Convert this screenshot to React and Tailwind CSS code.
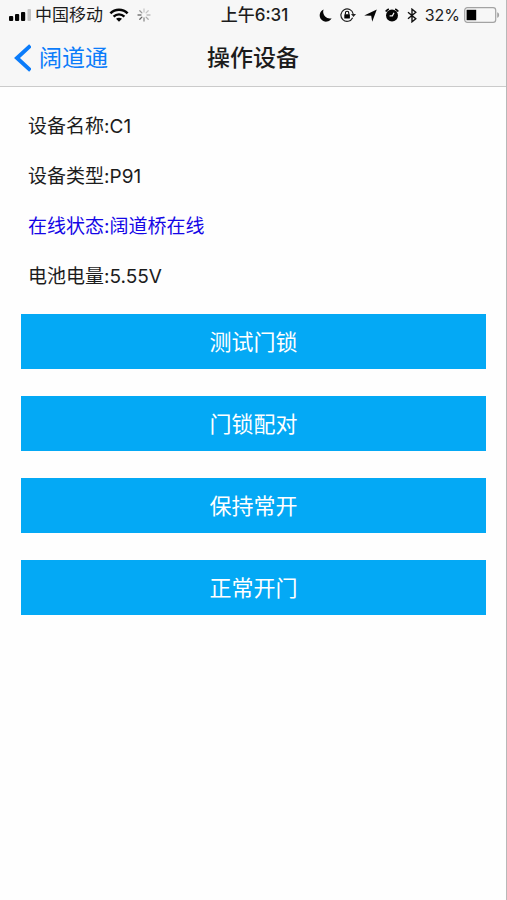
import React from "react";

function SignalIcon() {
  return (
    <svg width="22" height="12" viewBox="0 0 22 12" aria-hidden="true">
      <rect x="0" y="7" width="4.2" height="5" rx="1" fill="#050505" />
      <rect x="6" y="5" width="4.2" height="7" rx="1" fill="#050505" />
      <rect x="12" y="3" width="4.2" height="9" rx="1" fill="#050505" />
      <rect x="18.5" y="0" width="3.5" height="12" rx="1" fill="#c4c4c4" />
    </svg>
  );
}

function WifiIcon() {
  return (
    <svg width="20" height="14" viewBox="0 0 20 14" aria-hidden="true">
      <path d="M1.4 5.4C6.2 0.6 13.8 0.6 18.6 5.4" fill="none" stroke="#050505" strokeWidth="2.6" />
      <path d="M4.6 8.6C7.6 5.6 12.4 5.6 15.4 8.6" fill="none" stroke="#050505" strokeWidth="2.4" />
      <path d="M7 10.8C8.7 9.3 11.3 9.3 13 10.8L10 13.8Z" fill="#050505" />
    </svg>
  );
}

function SpinnerIcon() {
  return (
    <svg width="14" height="14" viewBox="0 0 14 14" fill="none" strokeWidth="1.3" strokeLinecap="round" aria-hidden="true">
      <path d="M7 4V1" stroke="#c9c9c9" />
      <path d="M9.1 4.9L11.2 2.8" stroke="#c4c4c4" />
      <path d="M10 7H13" stroke="#bdbdbd" />
      <path d="M9.1 9.1L11.2 11.2" stroke="#aaa" />
      <path d="M7 10V13" stroke="#8c8c8c" />
      <path d="M4.9 9.1L2.8 11.2" stroke="#666" />
      <path d="M4 7H1" stroke="#777" />
      <path d="M4.9 4.9L2.8 2.8" stroke="#999" />
    </svg>
  );
}

function MoonIcon() {
  return (
    <svg width="13" height="13" viewBox="0 0 13 13" aria-hidden="true">
      <path d="M4.6 0.5A6.3 6.3 0 1 0 12.6 9.2C8 10.8 2.6 6 4.6 0.5Z" fill="#050505" />
    </svg>
  );
}

function RotationLockIcon() {
  return (
    <svg width="16" height="14" viewBox="0 0 16 14" aria-hidden="true">
      <path d="M12.7 9.8A6.2 6.2 0 1 1 13.2 6" fill="none" stroke="#222" strokeWidth="1.2" />
      <path d="M11 6H16L13.5 9Z" fill="#222" />
      <rect x="4.3" y="6.2" width="5.6" height="4.2" rx="0.5" fill="#050505" />
      <path d="M5.4 6.5V5A1.7 1.7 0 0 1 8.8 5V6.5" fill="none" stroke="#050505" strokeWidth="1.1" />
    </svg>
  );
}

function LocationIcon() {
  return (
    <svg width="13" height="13" viewBox="0 0 13 13" aria-hidden="true">
      <path d="M12.8 0.4L8.2 12.8L7.2 6.8L0.2 6.4Z" fill="#050505" />
    </svg>
  );
}

function AlarmIcon() {
  return (
    <svg width="14" height="14" viewBox="0 0 14 14" aria-hidden="true">
      <circle cx="7" cy="7.6" r="6" fill="#050505" />
      <path d="M0.7 3.6A8 8 0 0 1 3.8 1M13.3 3.6A8 8 0 0 0 10.2 1" fill="none" stroke="#050505" strokeWidth="1.7" />
      <path d="M9 4.8L7.4 7.9H4.6" fill="none" stroke="#f7f7f7" strokeWidth="1.2" />
    </svg>
  );
}

function BluetoothIcon() {
  return (
    <svg width="10" height="15" viewBox="0 0 10 15" aria-hidden="true">
      <path d="M1 4.2L8.8 10.7L5 13.8V1.2L8.8 4.3L1 10.8" fill="none" stroke="#111" strokeWidth="1.4" />
    </svg>
  );
}

function BatteryIcon() {
  return (
    <svg width="36" height="16" viewBox="0 0 36 16" aria-hidden="true">
      <rect x="0.7" y="0.7" width="31" height="14.6" rx="2.6" fill="none" stroke="#a3a3a3" strokeWidth="1.2" />
      <rect x="2.6" y="2.8" width="9.6" height="10.4" fill="#000" />
      <path d="M33.2 5.2C35.8 6 35.8 10 33.2 10.8Z" fill="#a3a3a3" />
    </svg>
  );
}

const details = [
  { label: "设备名称", value: "C1" },
  { label: "设备类型", value: "P91" },
  { label: "在线状态", value: "阔道桥在线", online: true },
  { label: "电池电量", value: "5.55V" },
];

const actions = ["测试门锁", "门锁配对", "保持常开", "正常开门"];

export default function App() {
  return (
    <div className="min-h-screen border-r border-[#b8b8b8] bg-[#fefefe] font-['Inter','Noto_Sans_CJK_SC',sans-serif] text-[#1c1c1c]">
      <header className="border-b border-[#cbcbcb] bg-[#f7f7f7]">
        <div className="grid h-[30px] grid-cols-[1fr_auto_1fr] items-center pr-1.5 pl-[9px] text-[17px] leading-6">
          <div className="flex items-center">
            <SignalIcon />
            <span className="mr-1.5 ml-1">中国移动</span>
            <WifiIcon />
            <span className="ml-2">
              <SpinnerIcon />
            </span>
          </div>
          <time className="font-medium">上午6:31</time>
          <div className="flex items-center justify-end gap-2">
            <MoonIcon />
            <RotationLockIcon />
            <LocationIcon />
            <AlarmIcon />
            <BluetoothIcon />
            <span className="flex items-center gap-1 text-base">
              32%
              <BatteryIcon />
            </span>
          </div>
        </div>
        <div className="grid h-14 grid-cols-[1fr_auto_1fr] items-center px-3.5">
          <button type="button" className="flex items-center gap-2 justify-self-start text-[23px] leading-8 text-[#0b7cfa]">
            <svg width="17" height="28" viewBox="0 0 17 28" aria-hidden="true">
              <path d="M16.5 1.6L3 14L16.5 26.4" fill="none" stroke="currentColor" strokeWidth="4" />
            </svg>
            阔道通
          </button>
          <h1 className="text-[23px] leading-8 font-medium">操作设备</h1>
        </div>
      </header>
      <main className="px-5 pt-[15px]">
        <dl className="px-2 text-[19px] leading-[50px]">
          {details.map(({ label, value, online }) => (
            <div key={label} className={online ? "flex text-[#1507e6]" : "flex"}>
              <dt>{label}:</dt>
              <dd>{value}</dd>
            </div>
          ))}
        </dl>
        <div className="mt-3 grid gap-[27px] pl-px">
          {actions.map((action) => (
            <button key={action} type="button" className="h-[55px] bg-[#04a9f5] text-[22px] leading-8 text-white">
              {action}
            </button>
          ))}
        </div>
      </main>
    </div>
  );
}
